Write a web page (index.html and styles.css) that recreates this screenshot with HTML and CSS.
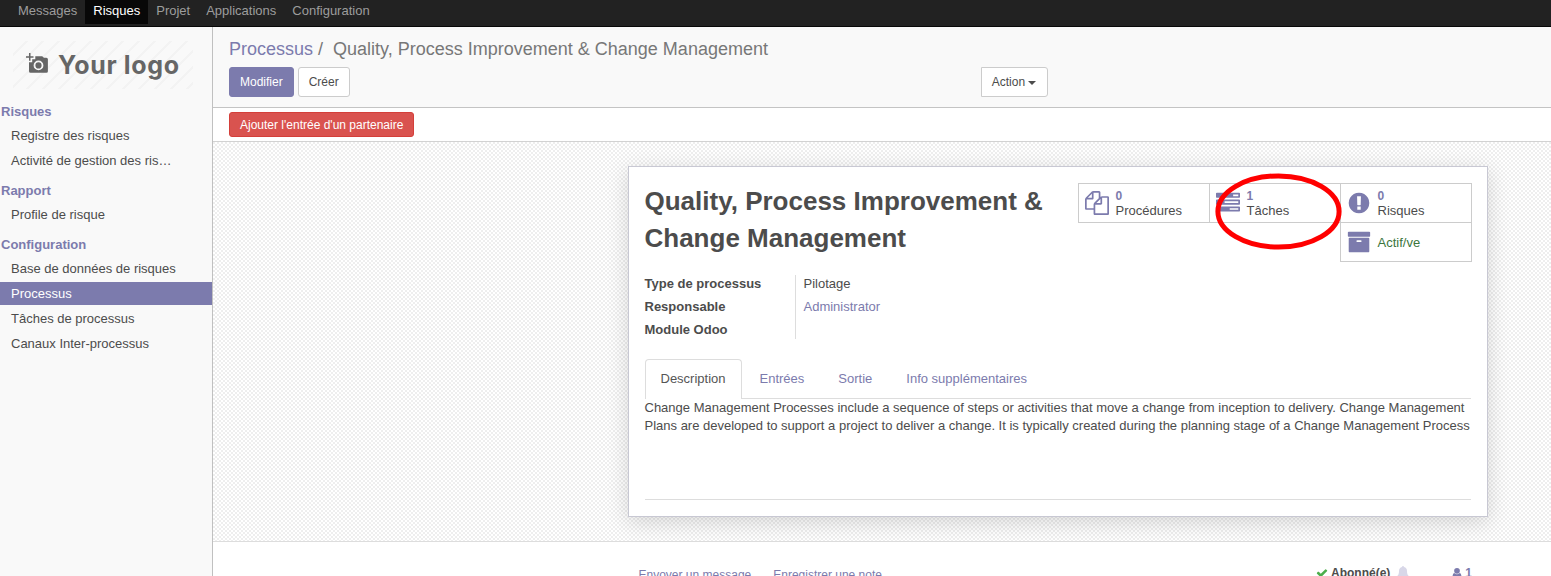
FILE: index.html
```html
<!DOCTYPE html>
<html lang="fr">
<head>
<meta charset="utf-8">
<title>Processus</title>
<link rel="stylesheet" href="styles.css">
</head>
<body>
<nav class="navbar">
  <a class="nav-item">Messages</a><a class="nav-item active">Risques</a><a class="nav-item">Projet</a><a class="nav-item">Applications</a><a class="nav-item">Configuration</a>
</nav>
<div class="app">
  <aside class="sidebar">
    <div class="logo">
      <svg class="camera" width="24" height="24" viewBox="0 0 24 24"><path fill="#666" fill-rule="evenodd" d="M3 1h1.500v3.200H7.500v1.500H4.500v3H3V5.700H0V4.200h3zM9.300 4.200h6.900l1.700 1.600h2.500q1.500 0 1.500 1.500v12q0 1.500-1.500 1.500H4.500q-1.500 0-1.500-1.500V10.200h3.200V7.200h3.100zM12.500 8.500a4.900 4.900 0 1 0 0 9.800 4.900 4.900 0 1 0 0-9.800zM12.500 10.300a3.100 3.100 0 1 1 0 6.200 3.100 3.100 0 1 1 0-6.200z"/></svg>
      <span class="logo-text">Your logo</span>
    </div>
    <div class="menu-title">Risques</div>
    <a class="menu-item">Registre des risques</a>
    <a class="menu-item">Activité de gestion des risques</a>
    <div class="menu-title">Rapport</div>
    <a class="menu-item">Profile de risque</a>
    <div class="menu-title">Configuration</div>
    <a class="menu-item">Base de données de risques</a>
    <a class="menu-item selected">Processus</a>
    <a class="menu-item">Tâches de processus</a>
    <a class="menu-item">Canaux Inter-processus</a>
  </aside>
  <main class="main">
    <header class="control-panel">
      <div class="breadcrumb"><a>Processus</a><span class="slash">/</span><span>Quality, Process Improvement &amp; Change Management</span></div>
      <div class="toolbar">
        <button class="btn primary">Modifier</button>
        <button class="btn">Créer</button>
        <button class="btn action">Action<span class="caret"></span></button>
      </div>
    </header>
    <div class="statusbar"><button class="btn danger">Ajouter l'entrée d'un partenaire</button></div>
    <div class="sheet-bg">
      <section class="sheet">
        <div class="sheet-head">
          <h1>Quality, Process Improvement &amp; Change Management</h1>
          <div class="stats">
            <div class="stat">
              <svg class="fa" viewBox="0 0 1792 1792"><path d="M1696 384q40 0 68 28t28 68v1216q0 40-28 68t-68 28h-960q-40 0-68-28t-28-68v-288h-544q-40 0-68-28t-28-68v-672q0-40 20-88t48-76l408-408q28-28 76-48t88-20h416q40 0 68 28t28 68v328q68-40 128-40h416zm-544 213l-299 299h299v-299zm-640-384l-299 299h299v-299zm196 647l316-316v-416h-384v416q0 40-28 68t-68 28h-416v640h512v-256q0-40 20-88t48-76zm956 804v-1152h-384v416q0 40-28 68t-68 28h-416v640h896z"/></svg>
              <div><b>0</b><span>Procédures</span></div>
            </div>
            <div class="stat">
              <svg class="fa" viewBox="0 0 1792 1792"><path d="M1024 1408h640v-128h-640v128zm-384-512h1024v-128h-1024v128zm640-512h384v-128h-384v128zm512 832v256q0 26-19 45t-45 19h-1664q-26 0-45-19t-19-45v-256q0-26 19-45t45-19h1664q26 0 45 19t19 45zm0-512v256q0 26-19 45t-45 19h-1664q-26 0-45-19t-19-45v-256q0-26 19-45t45-19h1664q26 0 45 19t19 45zm0-512v256q0 26-19 45t-45 19h-1664q-26 0-45-19t-19-45v-256q0-26 19-45t45-19h1664q26 0 45 19t19 45z"/></svg>
              <div><b>1</b><span>Tâches</span></div>
              <svg class="highlight" width="130" height="80" viewBox="0 0 130 80"><ellipse cx="65.500" cy="40.500" rx="60.600" ry="35.600" fill="none" stroke="#f00" stroke-width="5"/></svg>
            </div>
            <div class="stat">
              <svg class="fa" viewBox="0 0 1792 1792"><path d="M896 128q209 0 385.500 103t279.500 279.500 103 385.500-103 385.500-279.500 279.500-385.500 103-385.500-103-279.500-279.500-103-385.500 103-385.500 279.500-279.500 385.500-103zm128 1247v-190q0-14-9-23.500t-22-9.500h-192q-13 0-23 10t-10 23v190q0 13 10 23t23 10h192q13 0 22-9.500t9-23.500zm-2-344l18-621q0-12-10-18-10-8-24-8h-220q-14 0-24 8-10 6-10 18l17 621q0 10 10 17.500t24 7.500h185q14 0 23.500-7.500t10.500-17.500z"/></svg>
              <div><b>0</b><span>Risques</span></div>
            </div>
            <div class="stat archive">
              <svg class="fa" viewBox="0 0 1792 1792"><path d="M1088 832q0-26-19-45t-45-19h-256q-26 0-45 19t-19 45 19 45 45 19h256q26 0 45-19t19-45zm576-192v960q0 26-19 45t-45 19h-1408q-26 0-45-19t-19-45v-960q0-26 19-45t45-19h1408q26 0 45 19t19 45zm64-448v256q0 26-19 45t-45 19h-1536q-26 0-45-19t-19-45v-256q0-26 19-45t45-19h1536q26 0 45 19t19 45z"/></svg>
              <div><span class="green">Actif/ve</span></div>
            </div>
          </div>
        </div>
        <div class="fields">
          <div class="labels"><div>Type de processus</div><div>Responsable</div><div>Module Odoo</div></div>
          <div class="values"><div>Pilotage</div><div><a>Administrator</a></div></div>
        </div>
        <div class="tabs"><a class="tab current">Description</a><a class="tab">Entrées</a><a class="tab">Sortie</a><a class="tab">Info supplémentaires</a></div>
        <p class="description">Change Management Processes include a sequence of steps or activities that move a change from inception to delivery. Change Management<br>Plans are developed to support a project to deliver a change. It is typically created during the planning stage of a Change Management Process</p>
      </section>
    </div>
    <footer class="chatter">
      <a>Envoyer un message</a><a>Enregistrer une note</a>
      <div class="follow">
        <svg class="check" width="12" height="12" viewBox="0 0 1792 1792"><path fill="#4cae4c" d="M1671 566q0 40-28 68l-724 724-136 136q-28 28-68 28t-68-28l-136-136-362-362q-28-28-28-68t28-68l136-136q28-28 68-28t68 28l294 295 656-657q28-28 68-28t68 28l136 136q28 28 28 68z"/></svg>
        <b>Abonné(e)</b>
        <svg class="bell" width="12" height="13" viewBox="0 0 12 13"><path fill="#d8d7e8" d="M6 0q1 0 1 .9c2 .5 3 2 3 4 0 3 .7 4.300 2 5.300v.8H0v-.8c1.300-1 2-2.300 2-5.300 0-2 1-3.500 3-4Q5 0 6 0z"/></svg>
        <svg class="user" width="10" height="12" viewBox="0 0 10 12"><path fill="#7c7bad" d="M5 0a2.800 2.800 0 1 1 0 5.700A2.800 2.800 0 0 1 5 0zM2.300 5q1.200 1.200 2.700 1.200T7.700 5Q9.500 5 9.500 9.500q0 1.500-1.500 1.500H2Q.5 11 .5 9.500.5 5 2.300 5z"/></svg>
        <a class="count">1</a>
      </div>
    </footer>
  </main>
</div>
</body>
</html>
```

FILE: styles.css
```css
* { box-sizing: border-box; }
html, body { height: 100%; margin: 0; overflow: hidden; }
body {
  font-family: "Liberation Sans", Arial, sans-serif;
  font-size: 13px;
  line-height: 18px;
  color: #4c4c4c;
  background: #fff;
  display: flex;
  flex-direction: column;
}
a { color: #7c7bad; text-decoration: none; }

.navbar {
  flex: none;
  height: 27px;
  padding-left: 10px;
  background: #222;
  border-bottom: 1px solid #080808;
  display: flex;
}
.nav-item { height: 24px; padding: 2px 8px 0; color: #9d9d9d; }
.nav-item.active { background: #080808; color: #fff; }

.app { flex: 1; min-height: 0; display: flex; }
.sidebar {
  flex: none;
  width: 213px;
  background: #f9f9f9;
  border-right: 1px solid #c0c0c0;
}
.logo {
  margin: 14px 0 0 13px;
  width: 180px;
  height: 48px;
  display: flex;
  padding-left: 13px;
  background: repeating-linear-gradient(135deg, #f9f9f9 0, #f9f9f9 9px, #f3f3f3 9px, #f3f3f3 11.300px);
}
.camera { flex: none; margin-top: 11px; }
.logo-text {
  margin-left: 8px;
  font: 700 25px/49px Inter, sans-serif;
  letter-spacing: .65px;
  color: #666;
  white-space: nowrap;
}
.menu-title { margin-top: 6px; height: 25px; padding: 4px 1px 0; font-weight: bold; line-height: 18px; color: #7c7bad; }
.logo + .menu-title { margin-top: 10px; }
.menu-item {
  display: block;
  height: 23px;
  margin-bottom: 2px;
  padding: 3px 35px 2px 11px;
  color: #4c4c4c;
  white-space: nowrap;
  overflow: hidden;
  text-overflow: ellipsis;
}
.menu-item.selected { background: #7c7bad; color: #fff; }

.main { flex: 1; min-width: 0; display: flex; flex-direction: column; }
.control-panel {
  flex: none;
  height: 81px;
  padding: 9px 16px 0;
  background: #f9f9f9;
  border-bottom: 1px solid #c4c4c4;
}
.breadcrumb { height: 31px; font-size: 18px; line-height: 26px; color: #777; }
.slash { padding: 0 10px 0 5px; }
.toolbar { display: flex; gap: 4px; }
.btn {
  height: 30px;
  padding: 0 10px;
  border: 1px solid #ccc;
  border-radius: 3px;
  background: #fff;
  color: #4c4c4c;
  font: 12px/18px "Liberation Sans", Arial, sans-serif;
}
.btn.primary { background: #7c7bad; border-color: #7c7bad; color: #fff; }
.btn.action { margin-left: 627px; padding-right: 11px; border-radius: 0 3px 3px 0; }
.caret { display: inline-block; margin-left: 3px; vertical-align: middle; border: 4px solid transparent; border-top-color: #4c4c4c; border-bottom: 0; }
.statusbar { flex: none; height: 34px; padding: 4px 16px; border-bottom: 1px solid #d2d2d2; display: flex; }
.btn.danger { height: 25px; background: #d9534f; border-color: #d43f3a; color: #fff; }

.sheet-bg {
  flex: none;
  height: 400px;
  padding: 24px 0 0 415px;
  border-bottom: 1px solid #ddd;
  background: repeating-conic-gradient(#fff 0 25%, #eee 0 50%) 0 0 / 4px 4px;
}
.sheet {
  width: 860px;
  height: 351px;
  padding: 16px 16px 16px 15.500px;
  background: #fff;
  border: 1px solid #c8c8d3;
  box-shadow: 0 5px 20px rgba(0, 0, 0, .15);
}
.sheet-head { display: flex; justify-content: space-between; height: 92px; }
h1 { width: 410px; margin: 0; font-size: 26px; line-height: 37px; }
.stats { display: grid; grid-template-columns: repeat(3, 131px); grid-auto-rows: 39px; width: 393px; }
.stat {
  position: relative;
  width: 132px;
  height: 40px;
  padding: 0 6px;
  border: 1px solid #ccc;
  display: flex;
  align-items: center;
  gap: 6.500px;
  line-height: 15px;
}
.stat b, .stat span { display: block; }
.stat b { height: 14px; line-height: 14px; font-size: 12px; color: #7c7bad; }
.stat.archive { grid-column: 3; }
.stat .green { color: #3c763d; }
.fa { width: 24px; height: 24px; fill: #7c7bad; flex: none; }
.highlight { position: absolute; left: 3px; top: -13px; z-index: 2; }

.fields { display: flex; line-height: 23px; height: 64px; }
.labels { width: 151px; border-right: 1px solid #ddd; font-weight: bold; margin-right: 8px; }
.labels div, .values div { height: 23px; line-height: 18px; }

.tabs { display: flex; gap: 2px; height: 40px; margin-top: 20px; border-bottom: 1px solid #ddd; }
.tab { height: 40px; padding: 11px 16px 0; }
.tab.current { padding: 10px 15px 0; border: 1px solid #ddd; border-bottom: 0; border-radius: 4px 4px 0 0; background: #fff; color: #555; }
.description { margin: 0; height: 101px; border-bottom: 1px solid #ddd; white-space: nowrap; }

.chatter { flex: none; height: 50px; padding: 24px 0 0 425.500px; display: flex; gap: 22px; font-size: 12px; }
.follow { margin-left: 412px; display: flex; align-items: flex-start; line-height: 14px; }
.check { margin-top: 1px; }
.follow b { margin-left: 3px; }
.bell { margin-left: 7px; }
.user { margin: 2px 3px 0 43px; }
.count { font-weight: bold; }
```
